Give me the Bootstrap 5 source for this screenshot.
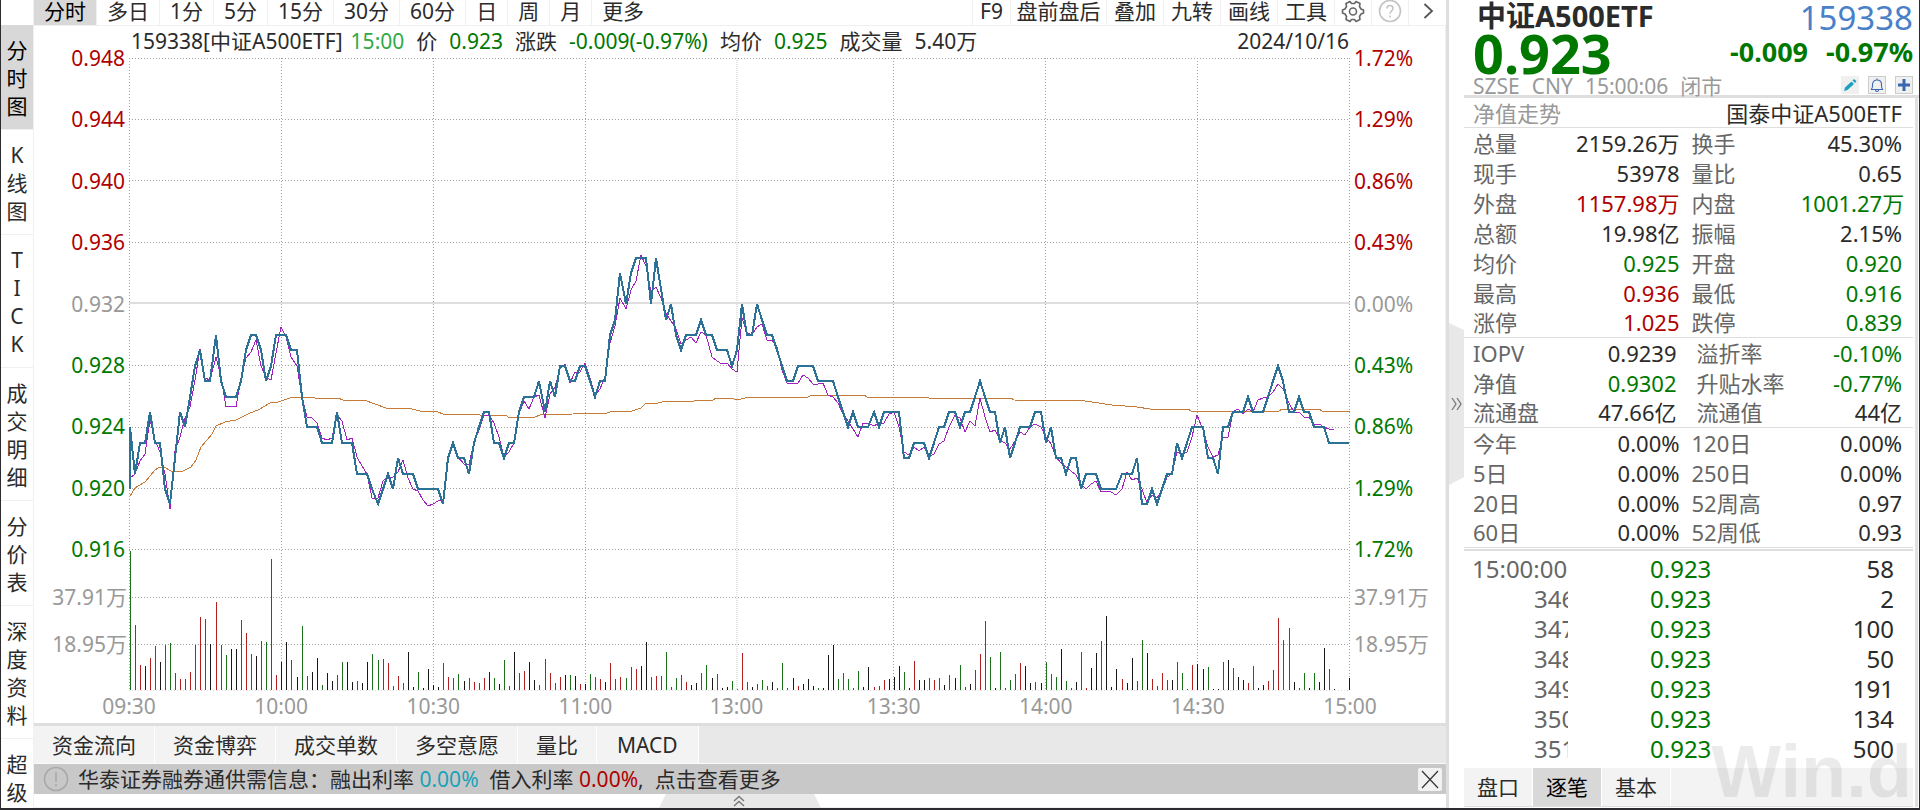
<!DOCTYPE html>
<html lang="zh-CN">
<head>
<meta charset="utf-8">
<meta name="viewport" content="width=device-width, initial-scale=1">
<title>中证A500ETF 159338 分时图</title>
<link href="https://cdn.jsdelivr.net/npm/bootstrap@5.3.0/dist/css/bootstrap.min.css" rel="stylesheet">
<style>
:root{--up:#b00000;--down:#007800;--ink:#2b2b2b;--mute:#999;--rule:#dedede;--soft:#f0f0f0}
body{font:21px/30px "Noto Sans","Noto Sans CJK SC",sans-serif;color:var(--ink);background:#fff}
button{font:inherit;color:inherit;background:none;border:0;padding:0;white-space:nowrap}
svg{display:block}
.up{color:var(--up)}.down{color:var(--down)}.mute{color:var(--mute)}
.app-window{min-height:100vh;border:solid #2b2b30;border-width:0 1px 2px}

.side-tabs{width:33px;padding-top:25px;border-right:1px solid var(--soft)}
.side-tabs button{width:32px;padding:11px 0 9px;line-height:28px;text-align:center;white-space:normal;border-bottom:1px solid var(--soft)}
.side-tabs button span{display:block}
.side-tabs .active{background:#d8d8d8;color:#000}
.side-clip{height:808px;overflow:hidden}

.top-tabs{height:26px;border-bottom:1px solid var(--soft);overflow:hidden}
.top-tabs button{height:25px;line-height:20px;padding:0 10px 4px;border-right:1px solid var(--soft)}
.top-tabs .active{background:#d8d8d8;color:#000}
.top-tabs .more{border-right:0}
.top-tabs .tool{width:57px;padding:0 0 4px}
.top-tabs .tool-f9{width:39px;border-left:1px solid var(--soft)}
.top-tabs .tool-long{width:96px}
.top-tabs .tool-icon{width:37px;display:flex;align-items:center;justify-content:center}
.top-tabs .tool-icon:last-child{border-right:0}

.chart-side{border-right:1px solid var(--soft)}
.quote-line{height:22px;padding:0 96px 0 97px;gap:12px;white-space:nowrap}
.quote-id{gap:8px}
.plot-row{height:643px}
.axis{line-height:20px;white-space:nowrap}
.axis-left{width:95px;padding-right:4px;text-align:right}
.axis-right{width:95px;padding-left:4px}
.axis-price{height:511px}
.axis-volume{padding-top:28px;gap:27px}
.axis-left .axis-volume{margin-right:-2px}
.plot{padding-top:10px}
.plot svg{width:100%;height:633px}
.time-axis{display:grid;grid-template-columns:152fr 152fr 152fr 151fr 157fr 152fr 152fr 152fr 0;height:32px;margin:0 95px}
.time-axis span{width:0;display:flex;justify-content:center;white-space:nowrap}

.indicator-tabs{height:41px;background:#e8e8e8;border-top:3px solid var(--rule);border-bottom:1px solid #fafafa}
.indicator-tabs button{background:#f3f3f3;border-right:1px solid #fff;padding:0 18px}
.indicator-tabs button:last-child{padding:0 20px}
.notice{height:30px;background:#c8c8c8;padding:0 4px 0 9px;white-space:nowrap}
.notice-icon{margin-right:9px}
.close-notice{width:24px;height:23px;background:#f2f2f2;border-radius:2px}
.drawer{height:14px;padding-left:625px;border-bottom:1px solid var(--soft)}

.splitter{width:18px;border-left:3px solid var(--rule)}
.quote-side{width:455px}
.quote-body{border-right:3px solid #e0e0e0;margin-right:1px;padding-right:2px;font-size:22px}
.head{height:98px;border-bottom:3px solid var(--rule);padding:0 6px 0 9px}
.head-name{font-size:29px;font-weight:700;line-height:31px;padding-left:4px}
.head-code{font-size:33px;line-height:36px;color:#4a80c8}
.head-price{font-size:54px;line-height:38px;font-weight:700}
.head-change{font-size:27px;line-height:36px;font-weight:700;gap:18px}
.head-meta{line-height:20px;gap:12px}
.head-icons{gap:9px}
.head-icons button{width:18px;height:18px;background:#f0f0f0;border:1px solid #ccc;display:flex;align-items:center;justify-content:center}
.fund{height:30px;border-bottom:1px solid var(--rule);padding:1px 11px 0 9px;line-height:29px}
.facts{width:100%;table-layout:fixed;border-bottom:1px solid var(--rule)}
.facts tr:last-child{line-height:29px}
.facts th{font-weight:400;color:#666;padding:0;white-space:nowrap}
.facts td{text-align:right;padding:0;white-space:nowrap}
.facts th:first-child{padding-left:9px}
.facts td:last-child{padding-right:11px}
.facts th:nth-child(3){padding-left:12px}
.facts-nav td:nth-child(2){padding-right:3px}
.facts-nav th:nth-child(3){padding-left:17px}
.tick-list{border-top:2px solid var(--rule);margin-top:1px;padding:3px 0 4px}
.ticks{width:100%;table-layout:fixed;font-size:24px}
.ticks td{padding:0;white-space:nowrap}
.ticks td:first-child{color:#666;padding-left:8px;overflow:hidden}
.ticks td.serial{padding-left:70px}
.ticks td:nth-child(2){padding-left:82px}
.ticks td:last-child{text-align:right;padding-right:19px}
.panel-tabs{height:39px;background:#f3f3f3;border-bottom:1px solid var(--rule);font-size:21px}
.panel-tabs button{width:69px;border-right:1px solid #fff;line-height:38px}
.panel-tabs .active{background:#d8d8d8;color:#000}
.watermark{right:7px;bottom:-4px;font:700 74px/80px "Liberation Sans",sans-serif;color:rgba(0,0,0,.08);pointer-events:none}
</style>
<script src="https://cdn.jsdelivr.net/npm/bootstrap@5.3.0/dist/js/bootstrap.bundle.min.js"></script>
</head>
<body>
<div class="app-window d-flex">

  <div class="side-clip flex-shrink-0">
  <nav class="side-tabs d-flex flex-column" aria-label="视图">
    <button class="active"><span>分</span><span>时</span><span>图</span></button>
    <button><span>K</span><span>线</span><span>图</span></button>
    <button><span>T</span><span>I</span><span>C</span><span>K</span></button>
    <button><span>成</span><span>交</span><span>明</span><span>细</span></button>
    <button><span>分</span><span>价</span><span>表</span></button>
    <button><span>深</span><span>度</span><span>资</span><span>料</span></button>
    <button><span>超</span><span>级</span></button>
  </nav>
  </div>

  <main class="flex-grow-1 d-flex flex-column" style="min-width:0">
    <div class="top-tabs d-flex justify-content-between">
      <div class="d-flex">
        <button class="active">分时</button><button>多日</button><button>1分</button><button>5分</button><button>15分</button><button>30分</button><button>60分</button><button>日</button><button>周</button><button>月</button><button class="more">更多</button>
      </div>
      <div class="d-flex">
        <button class="tool tool-f9">F9</button><button class="tool tool-long">盘前盘后</button><button class="tool">叠加</button><button class="tool">九转</button><button class="tool">画线</button><button class="tool">工具</button>
        <button class="tool tool-icon" aria-label="设置"><svg width="24" height="24" viewBox="0 0 24 24" fill="none" stroke="#666" stroke-width="1.6" stroke-linejoin="round"><path d="M9 2.500L10.500 4.500H13.500L15 2.500L19 4.500L18.500 7.500L20 10L22.500 11V14L20 15L18.500 17.500L19 20.500L15 22.500L13.500 20.500H10.500L9 22.500L5 20.500L5.500 17.500L4 15L1.500 14V11L4 10L5.500 7.500L5 4.500Z"/><circle cx="12" cy="12.500" r="3.500"/></svg></button>
        <button class="tool tool-icon" aria-label="帮助"><svg width="24" height="24" viewBox="0 0 24 24" fill="none" stroke="#c4c4c4" stroke-width="1.600"><circle cx="12" cy="12" r="10.500"/><path d="M9 9.500C9 5.500 15 5.500 15 9.500C15 11.800 12 11.800 12 14.800M12 16.500V18.500"/></svg></button>
        <button class="tool tool-icon" aria-label="展开"><svg width="24" height="24" viewBox="0 0 24 24" fill="none" stroke="#555" stroke-width="1.800"><path d="M8.500 5L16 12L8.500 19"/></svg></button>
      </div>
    </div>

    <div class="chart-side flex-grow-1">
      <div class="quote-line d-flex">
        <span class="quote-id d-flex"><span>159338[中证A500ETF]</span><span style="color:#2eaa4a">15:00</span></span><span>价</span><span class="down">0.923</span><span>涨跌</span><span class="down">-0.009(-0.97%)</span><span>均价</span><span class="down">0.925</span><span>成交量</span><span>5.40万</span><span class="ms-auto">2024/10/16</span>
      </div>
      <div class="plot-row d-flex">
        <div class="axis axis-left flex-shrink-0">
          <div class="axis-price d-flex flex-column justify-content-between">
            <span class="up">0.948</span><span class="up">0.944</span><span class="up">0.940</span><span class="up">0.936</span><span class="mute">0.932</span><span class="down">0.928</span><span class="down">0.924</span><span class="down">0.920</span><span class="down">0.916</span>
          </div>
          <div class="axis-volume d-flex flex-column mute"><span>37.91万</span><span>18.95万</span></div>
        </div>
        <div class="plot flex-grow-1" style="min-width:0">
          <svg id="plot" viewBox="129 58 1221 633" preserveAspectRatio="none" shape-rendering="crispEdges" fill="none" role="img" aria-label="分时走势与成交量"></svg>
        </div>
        <div class="axis axis-right flex-shrink-0">
          <div class="axis-price d-flex flex-column justify-content-between">
            <span class="up">1.72%</span><span class="up">1.29%</span><span class="up">0.86%</span><span class="up">0.43%</span><span class="mute">0.00%</span><span class="down">0.43%</span><span class="down">0.86%</span><span class="down">1.29%</span><span class="down">1.72%</span>
          </div>
          <div class="axis-volume d-flex flex-column mute"><span>37.91万</span><span>18.95万</span></div>
        </div>
      </div>
      <div class="time-axis mute"><span>09:30</span><span>10:00</span><span>10:30</span><span>11:00</span><span>13:00</span><span>13:30</span><span>14:00</span><span>14:30</span><span>15:00</span></div>
    </div>

    <div class="indicator-tabs d-flex">
      <button>资金流向</button><button>资金博弈</button><button>成交单数</button><button>多空意愿</button><button>量比</button><button>MACD</button>
    </div>
    <div class="notice d-flex align-items-center">
      <svg class="notice-icon" width="26" height="26" viewBox="0 0 26 26" fill="none" stroke="#a8a8a8" stroke-width="1.600"><circle cx="13" cy="13" r="11.500"/><path d="M13 6V16M13 18V20.500"/></svg>
      <span>华泰证券融券通供需信息：融出利率 <span style="color:#18a2b8">0.00%</span>&nbsp; 借入利率 <span class="up">0.00%</span>, &nbsp;<a href="#" class="text-reset text-decoration-none">点击查看更多</a></span>
      <button class="close-notice ms-auto" aria-label="关闭"><svg width="24" height="23" viewBox="0 0 24 23" stroke="#333" stroke-width="1.200"><path d="M4 3L20 20M20 3L4 20"/></svg></button>
    </div>
    <div class="drawer"><svg width="162" height="14" viewBox="0 0 162 14" fill="none"><path d="M7 0H155L162 14H0Z" fill="#e8e8e8"/><path d="M75 7L80 2.500L85 7M75 12L80 7.500L85 12" stroke="#777" stroke-width="1.400"/></svg></div>
  </main>

  <div class="splitter flex-shrink-0 d-flex align-items-center"><svg width="15" height="162" viewBox="0 0 15 162" fill="none"><path d="M0 0L15 7V154L0 162Z" fill="#e8e8e8"/><path d="M3 75L7 81L3 87M8 75L12 81L8 87" stroke="#777" stroke-width="1.300"/></svg></div>

  <aside class="quote-side flex-shrink-0 position-relative">
    <div class="head">
      <div class="d-flex justify-content-between" style="height:34px"><span class="head-name">中证A500ETF</span><span class="head-code">159338</span></div>
      <div class="d-flex justify-content-between down" style="height:42px"><span class="head-price">0.923</span><span class="head-change d-flex"><span>-0.009</span><span>-0.97%</span></span></div>
      <div class="d-flex justify-content-between mute">
        <span class="head-meta d-flex"><span>SZSE</span><span>CNY</span><span>15:00:06</span><span>闭市</span></span>
        <span class="head-icons d-flex">
          <button class="border-0" aria-label="编辑"><svg width="16" height="16" viewBox="0 0 16 16" fill="#18a2c0"><path d="M2 14L3 10.500L9.500 4.500L12 7L5.500 13ZM10.500 3.500L12 2L14.500 4.200L13 6Z"/></svg></button>
          <button aria-label="提醒"><svg width="16" height="16" viewBox="0 0 16 16" fill="none" stroke="#3a68b0" stroke-width="1.100"><path d="M8 1.500V3M2 12.500C4 11.500 3.500 9.500 3.500 7.500C3.500 1.500 12.500 1.500 12.500 7.500C12.500 9.500 12 11.500 14 12.500ZM6.500 13C6.500 15 9.500 15 9.500 13"/></svg></button>
          <button aria-label="添加"><svg width="16" height="16" viewBox="0 0 16 16" stroke="#3a68b0" stroke-width="3"><path d="M8 2V14M2 8H14"/></svg></button>
        </span>
      </div>
    </div>
    <div class="quote-body">
      <div class="fund d-flex justify-content-between"><span class="mute">净值走势</span><span>国泰中证A500ETF</span></div>
      <table class="facts"><colgroup><col style="width:20%"><col style="width:28%"><col style="width:27%"><col style="width:25%"></colgroup>
        <tr><th>总量</th><td>2159.26万</td><th>换手</th><td>45.30%</td></tr>
        <tr><th>现手</th><td>53978</td><th>量比</th><td>0.65</td></tr>
        <tr><th>外盘</th><td class="up">1157.98万</td><th>内盘</th><td class="down">1001.27万</td></tr>
        <tr><th>总额</th><td>19.98亿</td><th>振幅</th><td>2.15%</td></tr>
        <tr><th>均价</th><td class="down">0.925</td><th>开盘</th><td class="down">0.920</td></tr>
        <tr><th>最高</th><td class="up">0.936</td><th>最低</th><td class="down">0.916</td></tr>
        <tr><th>涨停</th><td class="up">1.025</td><th>跌停</th><td class="down">0.839</td></tr>
      </table>
      <table class="facts facts-nav"><colgroup><col style="width:20%"><col style="width:28%"><col style="width:27%"><col style="width:25%"></colgroup>
        <tr><th>IOPV</th><td>0.9239</td><th>溢折率</th><td class="down">-0.10%</td></tr>
        <tr><th>净值</th><td class="down">0.9302</td><th>升贴水率</th><td class="down">-0.77%</td></tr>
        <tr><th>流通盘</th><td>47.66亿</td><th>流通值</th><td>44亿</td></tr>
      </table>
      <table class="facts"><colgroup><col style="width:20%"><col style="width:28%"><col style="width:27%"><col style="width:25%"></colgroup>
        <tr><th>今年</th><td>0.00%</td><th>120日</th><td>0.00%</td></tr>
        <tr><th>5日</th><td>0.00%</td><th>250日</th><td>0.00%</td></tr>
        <tr><th>20日</th><td>0.00%</td><th>52周高</th><td>0.97</td></tr>
        <tr><th>60日</th><td>0.00%</td><th>52周低</th><td>0.93</td></tr>
      </table>
      <div class="tick-list">
      <table class="ticks"><colgroup><col style="width:104px"><col><col></colgroup>
        <tr><td>15:00:00</td><td class="down">0.923</td><td>58</td></tr>
        <tr><td class="serial">346</td><td class="down">0.923</td><td>2</td></tr>
        <tr><td class="serial">347</td><td class="down">0.923</td><td>100</td></tr>
        <tr><td class="serial">348</td><td class="down">0.923</td><td>50</td></tr>
        <tr><td class="serial">349</td><td class="down">0.923</td><td>191</td></tr>
        <tr><td class="serial">350</td><td class="down">0.923</td><td>134</td></tr>
        <tr><td class="serial">351</td><td class="down">0.923</td><td>500</td></tr>
      </table>
      </div>
      <div class="panel-tabs d-flex"><button>盘口</button><button class="active">逐笔</button><button>基本</button></div>
    </div>
    <div class="watermark position-absolute">Win.d</div>
  </aside>
</div>

<script>
// One entry per trading minute, in thousandths above 0.900.
const price = [24,21,23,23,25,23,23,20,19,22,25,24,26,28,29,27,27,30,27,26,26,26,27,29,30,30,29,27,28,30,
30,30,29,29,26,24,24,24,23,23,23,25,23,23,23,21,21,21,20,19,20,21,20,22,21,21,21,20,20,20,
20,20,19,22,23,22,22,21,23,24,25,25,23,23,22,23,23,25,26,26,26,27,25,27,26,28,28,27,27,28,
28,27,26,27,27,30,31,34,32,34,35,35,35,32,35,33,31,32,30,29,30,30,30,31,30,30,29,29,29,28,
29,32,30,30,32,31,30,30,29,28,27,27,28,28,28,28,27,27,27,27,26,25,24,25,24,24,24,25,24,25,
25,25,25,22,22,23,23,23,22,23,24,24,25,25,24,25,25,26,27,26,25,25,23,24,22,23,24,24,24,25,
25,23,24,22,22,21,22,22,20,21,21,21,20,20,20,20,21,21,21,22,19,19,20,19,20,21,21,23,22,23,
24,24,24,22,22,21,24,24,25,25,25,26,25,25,25,26,27,28,27,25,25,26,25,25,24,24,24,23,23,23,23,23];
const index = [20.7,21,21.8,22.3,24.5,23.2,22.4,21,18.7,22.5,23.4,24.6,25.3,27.1,29.1,27.2,27.1,28.6,27.3,25.3,25.4,25.3,27.2,28.5,28.9,29.7,28,27.3,27.1,28.8,
30.5,29.9,28.6,28,26,24.7,24.6,24.3,23.3,23.2,23.3,24.8,24.4,23.2,23.3,22.1,21.5,21,19.4,19.4,20.5,20.8,20.8,21.1,21.9,20.7,20,19.9,19.3,18.9,
19,19.2,19.3,22,22.9,22.1,21.6,21.6,23,23.8,24.8,24.8,24.3,23.4,22.1,22.4,23,24.9,25.7,25.2,26,26.1,24.6,26.2,26.6,27.8,28.1,26.9,27.6,27.6,
28.2,27.2,26.1,26.5,27.3,29.5,30.6,32.4,31.7,32.9,33.5,35.2,34.5,32.8,33.1,32.4,31.4,30.9,30.4,29.4,29.7,29.9,29.5,30.2,30,28.6,28.3,28.1,28.2,27.8,
27.6,31.1,30.1,30,30.5,30.7,29.7,29.7,29.2,27.7,26.9,26.9,26.9,27.4,27.2,26.8,26.8,26.9,26.1,26,25.6,24.9,24.4,23.9,23.4,24.3,24.3,24.1,24.3,24.3,
24.9,25,24,22.4,22.2,22.7,22.5,22.7,22.1,22.3,22.9,23.1,24,24.8,24.6,23.7,24.4,24.1,25.9,24.7,23.7,23.8,23.2,23,22.6,23.1,23.7,23.5,24,24.2,
24,23.4,22.9,22.1,21.7,21.4,21.2,20.9,20.3,20,20.3,20.5,19.8,19.9,19.8,19.6,20,21.1,20.6,20.7,20,19.1,19.6,19.4,19.9,20.8,21,22.4,22.3,22.4,
23.4,24.8,23.8,22.7,22.1,22.2,23.4,23.4,25,25.2,24.9,25.2,25,25.8,25.9,26,26.3,26.8,26.5,25.6,25,25,24.7,24.7,24.2,24.2,24,23.9,23.9];
const average = "130,496 135,488 145,482 155,470 160,467 164,467 171,471 183,471 191,467 196,460 201,447 212,434 216,426 225,422 236,420 250,413 258,410 270,403 278,402 290,398 303,397 315,398 338,398 343,400 364,400 386,408 412,409 420,411 438,412 443,414 480,415 506,415 508,417 535,417 540,415 573,414 607,413 610,412 632,411 641,408 645,404 658,403 666,401 694,401 713,400 716,398 732,398 736,400 750,397 808,397 812,395 864,395 867,397 926,397 929,398 1011,398 1014,400 1085,401 1112,405 1137,407 1150,409 1188,409 1191,411 1279,411 1282,409 1319,409 1322,411 1350,411";
// Volume per minute: direction (g down, r up, k flat) and bar height.
const volume = `g139 g65 r25 k24 r32 g44 k28 g45 g47 r17 r11 g11 r18 r45 r73 g71 k46 r88 g45 g35 k41 k41 r70 r57 r36 k34 g49 g48 r131 r15
k28 k48 g30 k13 g64 g14 k18 k32 g5 k17 k9 r15 g28 k28 k8 g9 k7 k28 g36 g30 r31 r27 g4 r14 g7 k38 k3 g18 k2 k21
k5 k3 g27 r13 r12 g16 k9 g12 r8 r7 r12 k18 g12 k6 g30 r4 k38 r17 r19 k28 k10 r5 g31 r17 g7 r13 k15 g15 k14 r6
k6 g16 g13 r11 k8 r27 r11 r13 g12 r23 r21 k24 k48 g13 r14 g14 g38 r3 g12 g15 r8 k5 k7 r17 g25 k12 g16 k2 k3 g9
r1 r37 g8 k3 r6 g10 g4 k8 g2 g27 g2 k12 r4 k6 k11 k4 g2 k2 k35 k45 g11 g17 g11 r2 g19 k3 k23 r3 g4 r10
k11 k13 k24 g18 k2 r29 k10 k10 g12 r10 r12 k5 r15 k12 g25 r3 k6 r20 r36 g69 g33 k2 g38 r2 g10 r16 r27 k24 k7 r8
k7 g28 r16 g13 k41 g9 r2 k8 g38 r2 k22 k37 g49 k74 k3 k21 r11 k7 k32 r9 g50 k37 r11 g4 r17 r10 k10 r28 g17 r1
r25 k26 k21 g23 k1 k1 r28 k30 r22 k13 k10 r7 g24 k2 k5 r9 r20 r72 g50 g62 k8 r2 g17 k2 g17 k8 k42 g21 k1 k0 k0 k12`.split(/\s+/);

const px = n => Math.round(129.5 + n * 5.0614), py = v => Math.round(489 - (v - 20) * 15.4);
const line = a => a.map((v, n) => px(n) + "," + py(v)).join(" ");
const grid = '<g stroke="#a0a0a0" stroke-dasharray="1 2">'
  + [58.5,119.5,180.5,242.5,365.5,427.5,488.5,549.5,597.5,644.5].map(y => `<path d="M129 ${y}H1350"/>`).join("")
  + [129.5,281.5,433.5,585.5,893.5,1045.5,1197.5,1349.5].map(x => `<path d="M${x} 58V690"/>`).join("")
  + '</g><path d="M129 690.5H1350" stroke="#ddd" stroke-dasharray="1 2"/><path d="M737 58V690" stroke="#e4e4e4" stroke-width="2" stroke-dasharray="1 1"/>'
  + '<path d="M129 303H1350" stroke="#dedede" stroke-width="2"/>';
const ink = {g: "#1b701b", r: "#b02020", k: "#181818"};
const bars = Object.keys(ink).map(c => `<path stroke="${ink[c]}" d="${volume.map((b, n) => b[0] === c && b !== "k0" ? `M${Math.min(Math.floor(130 + n * 5.0614), 1349) + .5} 690v-${b.slice(1)}` : "").join("")}"/>`).join("");
document.getElementById("plot").innerHTML = grid + bars
  + `<polyline points="${average}" stroke="#c87a38"/>`
  + `<polyline points="${line(index)}" stroke="#a020c0"/>`
  + `<polyline points="130,489 ${line(price)}" stroke="#2b7296" stroke-width="2"/>`;
</script>
</body>
</html>
